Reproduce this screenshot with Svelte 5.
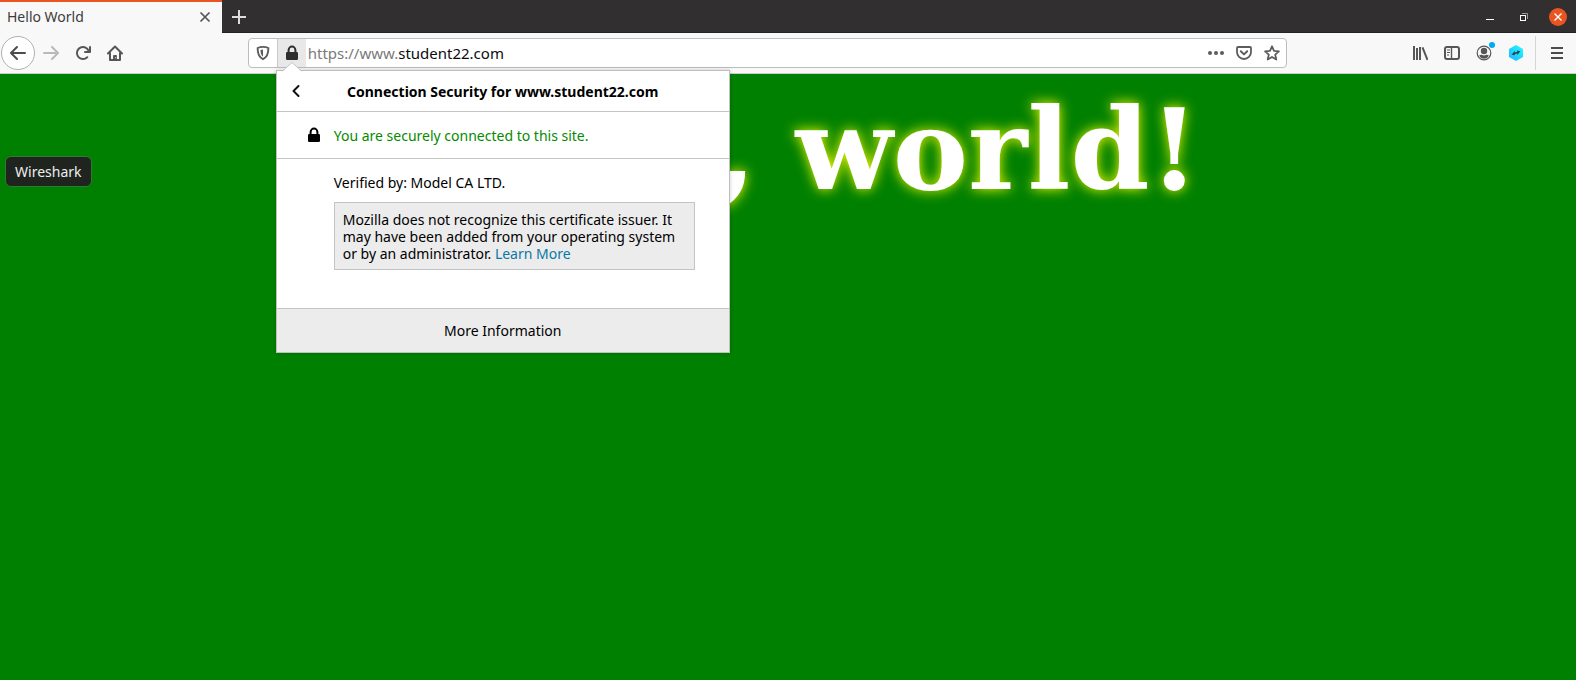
<script>
  let pageAddress = $state('student22.com');
</script>

{#snippet lock()}
  <svg width="16" height="16" viewBox="0 0 16 16" aria-hidden="true">
    <path d="M4.6 7V5a3.4 3.4 0 0 1 6.8 0v2" fill="none" stroke="currentColor" stroke-width="2" />
    <rect x="2" y="7" width="12" height="8" rx="1.2" fill="currentColor" />
  </svg>
{/snippet}

<div class="browser">
  <header class="titlebar">
    <div class="tab">
      <span>Hello World</span>
      <button aria-label="Close tab">
        <svg width="12" height="12" viewBox="0 0 12 12"><path d="M1.5 1.5l9 9M10.500 1.500l-9 9" fill="none" stroke="#555" stroke-width="1.700" /></svg>
      </button>
    </div>
    <button class="new-tab" aria-label="New tab">
      <svg width="16" height="16" viewBox="0 0 16 16"><path d="M8 1v14M1 8h14" fill="none" stroke="#ddd" stroke-width="2" /></svg>
    </button>
    <div class="window-controls">
      <button aria-label="Minimize">
        <svg width="18" height="18" viewBox="0 0 18 18"><path d="M5 11.500h8" stroke="#fff" /></svg>
      </button>
      <button aria-label="Restore">
        <svg width="18" height="18" viewBox="0 0 18 18"><path d="M7 5.500h5.500V11" fill="none" stroke="#9a9899" /><rect x="5.500" y="7.500" width="5" height="5" fill="none" stroke="#fff" /></svg>
      </button>
      <button aria-label="Close window">
        <svg width="18" height="18" viewBox="0 0 18 18"><circle cx="9" cy="9" r="9" fill="#e95420" /><path d="M5.500 5.500l7 7M12.500 5.500l-7 7" stroke="#fff" stroke-width="1.400" /></svg>
      </button>
    </div>
  </header>

  <nav class="toolbar" aria-label="Navigation">
    <button class="back" aria-label="Back">
      <svg width="16" height="16" viewBox="0 0 16 16"><path fill="#4c4c4c" d="M15 7H3.414l4.293-4.293a1 1 0 0 0-1.414-1.414l-6 6a1 1 0 0 0 0 1.414l6 6a1 1 0 0 0 1.414-1.414L3.414 9H15a1 1 0 0 0 0-2z" /></svg>
    </button>
    <button class="tool" aria-label="Forward" disabled>
      <svg width="16" height="16" viewBox="0 0 16 16"><path fill="#b9b9b9" d="M15.707 7.293l-6-6a1 1 0 0 0-1.414 1.414L12.586 7H1a1 1 0 0 0 0 2h11.586l-4.293 4.293a1 1 0 1 0 1.414 1.414l6-6a1 1 0 0 0 0-1.414z" /></svg>
    </button>
    <button class="tool" aria-label="Reload">
      <svg width="16" height="16" viewBox="0 0 16 16"><path fill="#565656" d="M15 1a1 1 0 0 0-1 1v2.418A6.995 6.995 0 1 0 8 15a6.954 6.954 0 0 0 4.950-2.050 1 1 0 0 0-1.414-1.414A5.019 5.019 0 1 1 12.549 6H10a1 1 0 0 0 0 2h5a1 1 0 0 0 1-1V2a1 1 0 0 0-1-1z" /></svg>
    </button>
    <button class="tool" aria-label="Home">
      <svg width="16" height="16" viewBox="0 0 16 16" fill="none" stroke="#565656" stroke-width="2" stroke-linecap="round" stroke-linejoin="round"><path d="M1 8.500l7-7 7 7M3 8v7h10V8" /><path d="M6.600 15v-4.500h2.800V15z" fill="#565656" stroke-width="1" /><path d="M8.700 12.500v.3" stroke="#fff" stroke-width=".8" /></svg>
    </button>

    <div class="spring"></div>

    <div class="address">
      <button class="shield" aria-label="Tracking protection">
        <svg width="16" height="16" viewBox="0 0 16 16"><path d="M8 1.900c-1.900 0-3.800.4-5.400 1.100 0 5.200.9 9 5.400 11.200 4.500-2.200 5.400-6 5.400-11.200C11.800 2.300 9.900 1.900 8 1.900z" fill="none" stroke="#5c5c5c" stroke-width="1.900" stroke-linejoin="round" /><path d="M8 4.500c-.9 0-1.800.2-2.500.5.1 3.200.6 5.200 2.500 6.700z" fill="#5c5c5c" /></svg>
      </button>
      <div class="identity">
        <button class="identity-button" aria-label="Site information">{@render lock()}</button>
        <section class="popup" aria-label="Connection security">
          <svg class="arrow" width="20" height="10" viewBox="0 0 20 10" aria-hidden="true"><path d="M0 10L10 .5 20 10z" fill="#fff" /><path d="M.5 9L10 .5 19.500 9" fill="none" stroke="#c4c4c4" /></svg>
          <header>
            <button aria-label="Go back">
              <svg width="16" height="16" viewBox="0 0 16 16"><path d="M10.500 3L5.500 8l5 5" fill="none" stroke="#111" stroke-width="2" stroke-linecap="round" stroke-linejoin="round" /></svg>
            </button>
            <h2>Connection Security for www.student22.com</h2>
          </header>
          <div class="status">
            {@render lock()}
            <p>You are securely connected to this site.</p>
          </div>
          <div class="details">
            <p>Verified by: Model CA LTD.</p>
            <p class="notice">Mozilla does not recognize this certificate issuer. It may have been added from your operating system or by an administrator. <a href="#learn-more">Learn More</a></p>
          </div>
          <button class="more">More Information</button>
        </section>
      </div>
      <label class="url">
        <span>https://www.</span>
        <input type="text" aria-label="Page address" bind:value={pageAddress} />
      </label>
      <div class="page-actions">
        <button aria-label="Page actions">
          <svg width="16" height="16" viewBox="0 0 16 16" fill="#5c5c5c"><circle cx="2" cy="8" r="2" /><circle cx="8" cy="8" r="2" /><circle cx="14" cy="8" r="2" /></svg>
        </button>
        <button aria-label="Save to Pocket">
          <svg width="16" height="16" viewBox="0 0 16 16" fill="none" stroke="#5c5c5c" stroke-width="2" stroke-linecap="round" stroke-linejoin="round"><path d="M2 2h12a1 1 0 0 1 1 1v4a7 7 0 0 1-14 0V3a1 1 0 0 1 1-1z" stroke-width="1.800" /><path d="M4.800 6.300L8 9.400l3.200-3.100" /></svg>
        </button>
        <button aria-label="Bookmark this page">
          <svg width="16" height="16" viewBox="0 0 16 16"><path d="M8 1.300l2 4.500 4.900.5-3.700 3.300 1.100 4.900L8 12l-4.300 2.500 1.100-4.900L1.100 6.300 6 5.800z" fill="none" stroke="#5c5c5c" stroke-width="1.800" stroke-linejoin="round" /></svg>
        </button>
      </div>
    </div>

    <div class="spring"></div>

    <button class="tool" aria-label="Library">
      <svg width="16" height="16" viewBox="0 0 16 16" fill="none" stroke="#565656" stroke-width="2"><path d="M2 1v14M5 3v12M8 2v13M10.500 2.300L15.500 15" /></svg>
    </button>
    <button class="tool" aria-label="Sidebars">
      <svg width="16" height="16" viewBox="0 0 16 16" fill="none" stroke="#565656"><rect x="1" y="2" width="14" height="12" rx="2" stroke-width="2" /><path d="M7.500 2v12" stroke-width="1.400" /><path d="M3 5h3M3 7.500h3M3 10h2" /></svg>
    </button>
    <button class="tool account" aria-label="Account">
      <svg width="16" height="16" viewBox="0 0 16 16"><circle cx="8" cy="8" r="6.800" fill="none" stroke="#565656" stroke-width="1.200" /><circle cx="8" cy="6" r="3.200" fill="#565656" /><path d="M3.200 10.500c1 2.300 2.800 3.200 4.800 3.200s3.800-.9 4.800-3.200c-1.300-.8-2.300-.8-3-.4-1.100.6-2.500.6-3.600 0-.7-.4-1.700-.4-3 .4z" fill="#565656" /></svg>
      <i></i>
    </button>
    <button class="tool" aria-label="Header extension">
      <svg width="16" height="16" viewBox="0 0 16 16"><defs><linearGradient id="hex" x1="0" y1="1" x2="1" y2="0"><stop offset="0" stop-color="#18b4ff" /><stop offset="1" stop-color="#20ffff" /></linearGradient></defs><path d="M8 0l7 4v8l-7 4-7-4V4z" fill="url(#hex)" /><path d="M3.500 9.800L6.800 6v4.300zM12.500 6.300L9.200 10V5.500z" fill="#35404c" /><path d="M6 8.500L10 7.500" stroke="#35404c" stroke-width="1.400" /></svg>
    </button>
    <div class="menu">
      <button aria-label="Open menu">
        <svg width="16" height="16" viewBox="0 0 16 16"><path d="M2 3h12M2 8h12M2 13h12" stroke="#4c4c4c" stroke-width="2" /></svg>
      </button>
    </div>
  </nav>

  <main>
    <h1>Hello, world!</h1>
    <span class="dock-tip" role="tooltip">Wireshark</span>
  </main>
</div>

<style>
  :global(body) { margin: 0; background: #008000; }
  * { box-sizing: border-box; }
  button { display: flex; align-items: center; justify-content: center; padding: 0; border: 0; background: none; color: inherit; font: inherit; }
  svg { display: block; flex: none; }
  p, h1, h2 { margin: 0; }
  .browser { display: flex; flex-direction: column; min-height: 100vh; font: 14px/17px "Noto Sans", sans-serif; color: #000; }

  .titlebar { display: flex; height: 33px; background: #322f30; box-shadow: inset 0 -1px #252223; }
  .tab { display: flex; align-items: center; justify-content: space-between; width: 222px; padding: 0 8px 2px 7px; border-top: 2px solid #e95420; background: #f8f8f8; color: #3c3c3c; }
  .tab button { width: 18px; height: 18px; }
  .new-tab { width: 34px; }
  .window-controls { display: flex; align-items: center; gap: 16px; margin-left: auto; padding-right: 9px; }

  .toolbar { display: flex; align-items: center; height: 41px; padding: 0 0 0 1px; border-bottom: 1px solid #ccc; background: #f8f8f8; }
  .back { width: 34px; height: 34px; border: 1px solid #b0b0b0; border-radius: 50%; background: #fff; }
  .tool { position: relative; width: 32px; height: 32px; }
  .spring { flex: 9; }
  .account i { position: absolute; top: 5px; right: 5px; width: 6px; height: 6px; border-radius: 50%; background: #00a8f5; }
  .menu { display: flex; align-items: center; justify-content: center; width: 41px; height: 34px; margin-left: 3px; padding-left: 2px; border-left: 1px solid #d5d5d5; }

  .address { display: flex; flex: 80; height: 30px; border: 1px solid #bdbdbd; border-radius: 4px; background: #fff; }
  .shield { width: 28px; }
  .identity { position: relative; display: flex; width: 29px; border-left: 1px solid #c8c8c8; }
  .identity-button { flex: 1; background: #e8e8e8; color: #2e2e2e; }
  .url { display: flex; flex: 1; align-items: center; padding-left: 2px; font-size: 15px; color: #7a7a7a; }
  .url input { flex: 1; min-width: 0; padding: 0; border: 0; outline: 0; background: none; font: inherit; color: #0c0c0d; }
  .page-actions { display: flex; }
  .page-actions button { width: 28px; }

  .popup { position: absolute; z-index: 2; top: 31px; left: -2px; width: 454px; border: 1px solid #bfbfbf; background: #fff; box-shadow: 0 0 4px rgb(0 0 0 / 20%); }
  .arrow { position: absolute; top: -9px; left: 5px; }
  .popup header { display: flex; align-items: center; height: 41px; padding: 0 11px; border-bottom: 1px solid #c4c4c4; }
  .popup h2 { flex: 1; padding-right: 16px; font-size: 14px; line-height: 17px; text-align: center; }
  .status { display: flex; align-items: center; gap: 12px; height: 47px; padding-left: 29px; border-bottom: 1px solid #c4c4c4; color: #000; }
  .status p { color: #058b00; }
  .details { display: flex; flex-direction: column; gap: 11px; height: 149px; padding: 15px 34px 0 57px; }
  .notice { padding: 8px 8px 7px; border: 1px solid #c4c4c4; background: #ececec; }
  .notice a { color: #0a78a6; text-decoration: none; }
  .more { width: 100%; height: 44px; border-top: 1px solid #c4c4c4; background: #ececec; }

  main { position: relative; flex: 1; padding-top: 9px; background: #008000; }
  h1 { font: bold 113px/134px "DejaVu Serif", serif; text-align: center; color: #fff; text-shadow: 0 0 13px #ff0; }
  .dock-tip { position: absolute; top: 82px; left: 5px; padding: 6px 9px; border: 1px solid #2f7a34; border-radius: 6px; background: #1f241f; color: #eee; }
</style>
